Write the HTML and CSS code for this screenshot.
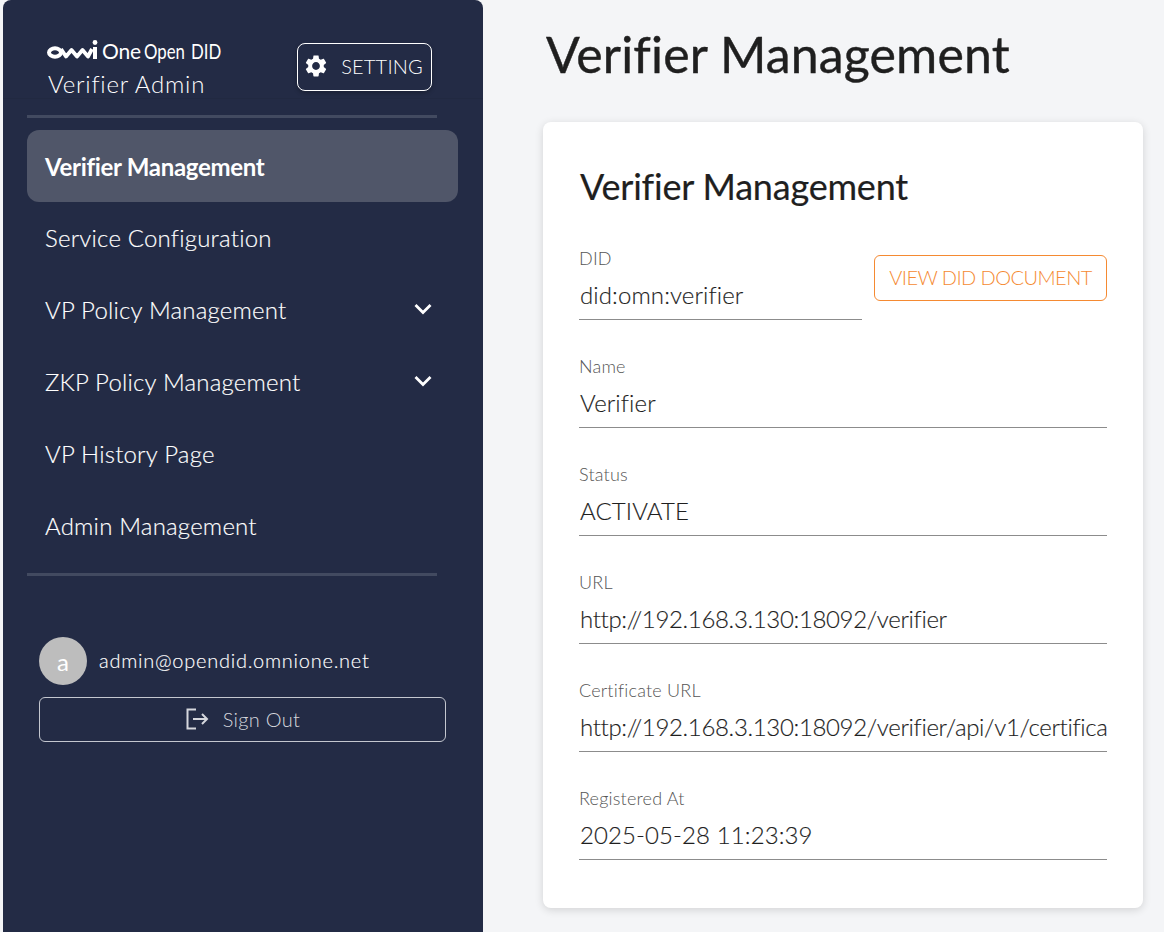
FILE: index.html
```html
<!DOCTYPE html>
<html lang="en">
  <head>
    <meta charset="utf-8">
    <title>Verifier Management</title>
    <link rel="stylesheet" href="styles.css">
  </head>
  <body>
    <aside class="sidebar">
      <header class="brand">
        <div class="brand-text">
          <div class="logo">
            <svg class="logo-mark" width="52" height="22" viewBox="0 0 52 22" aria-hidden="true">
              <ellipse cx="8" cy="13.500" rx="6" ry="4.200" fill="none" stroke="#fff" stroke-width="4"/>
              <polyline points="14,10 19,17.500 24.500,11 30,17.500 35.500,11 41,17.500 45,10" fill="none" stroke="#fff" stroke-width="3.800" stroke-linejoin="round"/>
              <rect x="46" y="8" width="4" height="12" fill="#fff"/>
              <circle cx="48" cy="3.500" r="2.400" fill="#fff"/>
            </svg>
            <span class="logo-name">One</span>
            <span class="logo-cond">Open</span>
            <span class="logo-cond">DID</span>
          </div>
          <div class="brand-sub">Verifier Admin</div>
        </div>
        <button class="setting-btn">
          <svg width="26" height="26" viewBox="0 0 24 24" fill="#fff" aria-hidden="true">
            <path d="M19.14 12.94c.04-.3.06-.61.06-.94 0-.32-.02-.64-.07-.94l2.03-1.58c.18-.14.23-.41.12-.61l-1.92-3.32c-.12-.22-.37-.29-.59-.22l-2.39.96c-.5-.38-1.03-.7-1.62-.94l-.36-2.54c-.04-.24-.24-.41-.48-.41h-3.84c-.24 0-.43.17-.47.41l-.36 2.54c-.59.24-1.13.57-1.62.94l-2.39-.96c-.22-.08-.47 0-.59.22L2.74 8.87c-.12.21-.08.47.12.61l2.03 1.58c-.05.3-.09.63-.09.94s.02.64.07.94l-2.03 1.58c-.18.14-.23.41-.12.61l1.92 3.32c.12.22.37.29.59.22l2.39-.96c.5.38 1.03.7 1.62.94l.36 2.54c.05.24.24.41.48.41h3.84c.24 0 .44-.17.47-.41l.36-2.54c.59-.24 1.13-.56 1.62-.94l2.39.96c.22.08.47 0 .59-.22l1.92-3.32c.12-.22.07-.47-.12-.61l-2.01-1.58zM12 15.6c-1.98 0-3.6-1.62-3.6-3.6s1.62-3.6 3.6-3.6 3.6 1.62 3.6 3.6-1.62 3.6-3.6 3.6z"/>
          </svg>
          <span>SETTING</span>
        </button>
      </header>
      <hr class="rule rule-top">
      <nav class="menu">
        <a class="menu-item active">Verifier Management</a>
        <a class="menu-item">Service Configuration</a>
        <a class="menu-item">VP Policy Management
          <svg class="chev" width="24" height="24" viewBox="0 0 24 24" aria-hidden="true"><polyline points="4.500,8 12,15.500 19.500,8"/></svg>
        </a>
        <a class="menu-item">ZKP Policy Management
          <svg class="chev" width="24" height="24" viewBox="0 0 24 24" aria-hidden="true"><polyline points="4.500,8 12,15.500 19.500,8"/></svg>
        </a>
        <a class="menu-item">VP History Page</a>
        <a class="menu-item">Admin Management</a>
      </nav>
      <hr class="rule rule-bottom">
      <div class="account">
        <div class="user">
          <div class="avatar">a</div>
          <div class="email">admin@opendid.omnione.net</div>
        </div>
        <button class="signout">
          <svg width="24" height="24" viewBox="0 0 24 24" fill="none" stroke="#d5d7dd" stroke-width="2" aria-hidden="true">
            <path d="M11 2.500H2.500v19H11"/>
            <path d="M8 12h14M17 7l5 5-5 5"/>
          </svg>
          <span>Sign Out</span>
        </button>
      </div>
    </aside>

    <main class="content">
      <h1 class="page-title">Verifier Management</h1>
      <section class="card">
        <h2 class="card-title">Verifier Management</h2>
        <div class="did-row">
          <div class="field">
            <label>DID</label>
            <div class="value">did:omn:verifier</div>
          </div>
          <button class="view-btn">VIEW DID DOCUMENT</button>
        </div>
        <div class="field">
          <label>Name</label>
          <div class="value">Verifier</div>
        </div>
        <div class="field">
          <label>Status</label>
          <div class="value">ACTIVATE</div>
        </div>
        <div class="field">
          <label>URL</label>
          <div class="value value-url">http://192.168.3.130:18092/verifier</div>
        </div>
        <div class="field">
          <label>Certificate URL</label>
          <div class="value value-url">http://192.168.3.130:18092/verifier/api/v1/certificate-vc</div>
        </div>
        <div class="field">
          <label>Registered At</label>
          <div class="value">2025-05-28 11:23:39</div>
        </div>
      </section>
    </main>
  </body>
</html>
```

FILE: styles.css
```css
/* reset/general */
* { box-sizing: border-box; }
html, body { height: 100%; }
body {
  margin: 0;
  height: 932px;
  overflow: hidden;
  display: flex;
  background: #f4f5f7;
  color: #1f1f1f;
  font-family: "Lato", "Noto Sans", sans-serif;
}
button { font-family: inherit; cursor: pointer; background: none; }

/* sidebar */
.sidebar {
  width: 480px;
  margin-left: 3px;
  flex: none;
  background: #232b45;
  border-radius: 8px 8px 0 0;
  color: #fff;
}
.brand {
  height: 99px;
  padding: 38px 51px 0 44px;
  display: flex;
  justify-content: space-between;
  align-items: flex-start;
  border-bottom: 1px solid #212941;
}
.logo { display: flex; align-items: center; height: 24px; }
.logo-mark { flex: none; }
.logo-name { font-size: 21px; margin-left: 3px; letter-spacing: -.2px; }
.logo-cond {
  display: inline-block;
  font-size: 21px;
  margin-left: 3px;
  margin-right: -7px;
  transform: scaleX(.8);
  transform-origin: left;
}
.brand-sub { margin: 7px 0 0 1px; font-size: 24px; letter-spacing: .75px; line-height: 30px; font-weight: 300; }
.setting-btn {
  width: 135px;
  height: 48px;
  margin-top: 5px;
  padding: 0 8px 2px 5px;
  display: flex;
  align-items: center;
  justify-content: space-between;
  color: #fff;
  font-size: 20px;
  font-weight: 300;
  letter-spacing: .2px;
  border: 1px solid #fff;
  border-radius: 8px;
  box-shadow: 0 2px 4px rgba(0, 0, 0, .25);
}
.rule { height: 3px; width: 410px; margin: 0 0 0 24px; border: 0; background: #424a60; }
.rule-top { margin-top: 16px; }
.rule-bottom { margin-top: 11px; }
.menu { margin-top: 12px; padding-left: 24px; }
.menu-item {
  height: 72px;
  width: 431px;
  padding: 0 23px 2px 18px;
  display: flex;
  align-items: center;
  justify-content: space-between;
  font-size: 24px;
  font-weight: 300;
  letter-spacing: .2px;
  -webkit-text-stroke: .15px #fff;
  border-radius: 12px;
}
.menu-item.active {
  padding-bottom: 0;
  background: #505669;
  font-weight: 700;
  letter-spacing: -.3px;
  -webkit-text-stroke: 0;
}
.chev { fill: none; stroke: #fff; stroke-width: 2.8; }
.account { margin: 61px 37px 0 36px; }
.user { display: flex; align-items: center; gap: 12px; }
.avatar {
  width: 48px;
  height: 48px;
  border-radius: 50%;
  background: #bdbdbd;
  color: #fff;
  font-size: 24px;
  text-align: center;
  line-height: 50px;
}
.email {
  padding-bottom: 2px;
  font-size: 20px;
  font-weight: 300;
  letter-spacing: .75px;
  -webkit-text-stroke: .15px #fff;
}
.signout {
  width: 407px;
  height: 45px;
  margin-top: 12px;
  padding-bottom: 2px;
  display: flex;
  align-items: center;
  justify-content: center;
  gap: 14px;
  color: #d5d7dd;
  font-size: 20px;
  font-weight: 300;
  letter-spacing: .3px;
  border: 1px solid #c4c7cf;
  border-radius: 6px;
}

/* main */
.content { flex: 1; padding: 0 21px 0 60px; }
.page-title {
  margin: 24px 0 0 3px;
  font-size: 50px;
  line-height: 60px;
  font-weight: 400;
  letter-spacing: .15px;
  -webkit-text-stroke: .4px #1f1f1f;
}
.card {
  width: 600px;
  height: 786px;
  margin-top: 38px;
  padding: 36px 36px 0;
  background: #fff;
  border-radius: 8px;
  box-shadow: 0 2px 8px rgba(0, 0, 0, .14);
}
.card-title {
  margin: 0 0 0 1px;
  font-size: 36px;
  line-height: 56px;
  font-weight: 400;
  letter-spacing: -.2px;
  -webkit-text-stroke: .2px #1f1f1f;
}
.did-row { display: flex; gap: 12px; align-items: flex-start; height: 108px; margin-top: 25px; }
.did-row .field { width: 283px; flex: none; }
.field { height: 108px; padding-top: 8px; }
.field label { display: block; font-size: 18px; font-weight: 300; line-height: 22px; color: #555; letter-spacing: .2px; }
.value {
  height: 46px;
  margin-top: 5px;
  font-size: 24px;
  line-height: 42px;
  padding-left: 1px;
  font-weight: 300;
  letter-spacing: .1px;
  -webkit-text-stroke: .15px #1f1f1f;
  white-space: nowrap;
  overflow: hidden;
  border-bottom: 1px solid #8c8c8c;
}
.value-url { letter-spacing: -.34px; }
.view-btn {
  width: 233px;
  height: 46px;
  margin-top: 16px;
  padding: 0 0 2px;
  color: #f58a32;
  font-size: 20px;
  font-weight: 300;
  letter-spacing: -.55px;
  border: 1px solid #f58a32;
  border-radius: 6px;
}
```
